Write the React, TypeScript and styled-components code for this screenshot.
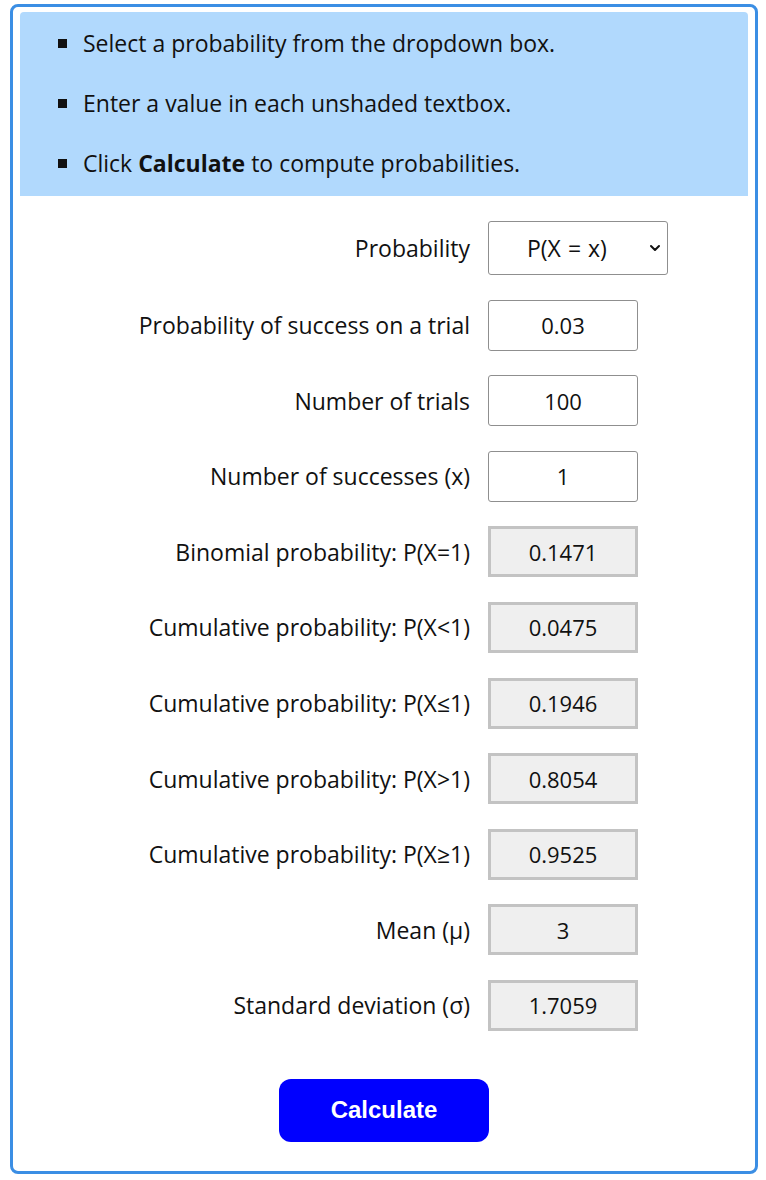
import React, { FC } from 'react'
import styled, { createGlobalStyle } from 'styled-components'

const GlobalStyle = createGlobalStyle`
  html, body {
    margin: 0;
    padding: 0;
    background: #ffffff;
  }
  body {
    font-family: 'Open Sans', 'Noto Sans', 'Liberation Sans', sans-serif;
    color: #111111;
  }
`

interface IRow {
  label: string
  value: string
  readOnly?: boolean
}

const rows: IRow[] = [
  { label: 'Probability of success on a trial', value: '0.03' },
  { label: 'Number of trials', value: '100' },
  { label: 'Number of successes (x)', value: '1' },
  { label: 'Binomial probability: P(X=1)', value: '0.1471', readOnly: true },
  { label: 'Cumulative probability: P(X<1)', value: '0.0475', readOnly: true },
  { label: 'Cumulative probability: P(X≤1)', value: '0.1946', readOnly: true },
  { label: 'Cumulative probability: P(X>1)', value: '0.8054', readOnly: true },
  { label: 'Cumulative probability: P(X≥1)', value: '0.9525', readOnly: true },
  { label: 'Mean (μ)', value: '3', readOnly: true },
  { label: 'Standard deviation (σ)', value: '1.7059', readOnly: true },
]

const App: FC = () => {
  return (
    <>
      <GlobalStyle />
      <Card>
        <Instructions>
          <li>Select a probability from the dropdown box.</li>
          <li>Enter a value in each unshaded textbox.</li>
          <li>
            Click <b>Calculate</b> to compute probabilities.
          </li>
        </Instructions>

        <Form>
          <Label>Probability</Label>
          <SelectBox>
            <span>P(X = x)</span>
            <svg width='14' height='14' viewBox='0 0 14 14'>
              <path d='M3 5 L7 9 L11 5' fill='none' stroke='#111' strokeWidth='2' strokeLinecap='round' strokeLinejoin='round' />
            </svg>
          </SelectBox>

          {rows.map((row) => (
            <React.Fragment key={row.label}>
              <Label>{row.label}</Label>
              <Field $readOnly={row.readOnly}>{row.value}</Field>
            </React.Fragment>
          ))}
        </Form>

        <ButtonRow>
          <CalcButton>Calculate</CalcButton>
        </ButtonRow>
      </Card>
    </>
  )
}

const Card = styled.div`
  box-sizing: border-box;
  width: 748px;
  height: 1170px;
  margin: 4px 0 0 10px;
  padding: 5px 7px 0;
  border: 3px solid #3b8ee4;
  border-radius: 8px;
`

const Instructions = styled.ul`
  margin: 0;
  padding: 16px 0 18px 63px;
  background: #b1d9fd;
  border-radius: 4px 4px 0 0;
  list-style: none;

  li {
    position: relative;
    font-size: 23px;
    line-height: 30px;
    margin-bottom: 30px;
  }
  li:last-child {
    margin-bottom: 0;
  }
  li::before {
    content: '';
    position: absolute;
    left: -25px;
    top: 11px;
    width: 9px;
    height: 9px;
    background: #111;
  }
  b {
    font-weight: 700;
  }
`

const Form = styled.div`
  display: grid;
  grid-template-columns: 450px auto;
  column-gap: 18px;
  row-gap: 24.6px;
  align-items: center;
  justify-items: start;
  margin-top: 25px;
`

const Label = styled.div`
  justify-self: end;
  font-size: 23px;
  white-space: nowrap;
`

const SelectBox = styled.div`
  box-sizing: border-box;
  width: 180px;
  height: 54px;
  display: flex;
  align-items: center;
  justify-content: space-between;
  padding: 0 5px 0 38px;
  border: 1px solid #8f8f8f;
  border-radius: 3px;
  font-size: 23px;
  word-spacing: 1px;
`

const Field = styled.div<{ $readOnly?: boolean }>`
  box-sizing: border-box;
  width: 150px;
  height: 51px;
  display: flex;
  align-items: center;
  justify-content: center;
  font-size: 22px;
  background: ${({ $readOnly }) => ($readOnly ? '#efefef' : '#ffffff')};
  border: ${({ $readOnly }) => ($readOnly ? '3px solid #c3c3c3' : '1px solid #8f8f8f')};
  border-radius: ${({ $readOnly }) => ($readOnly ? '0' : '3px')};
`

const ButtonRow = styled.div`
  display: flex;
  justify-content: center;
  margin-top: 48px;
`

const CalcButton = styled.button`
  width: 210px;
  height: 63px;
  background: #0000ff;
  color: #ffffff;
  border: none;
  border-radius: 12px;
  font-family: 'Liberation Sans', Arial, sans-serif;
  font-weight: 700;
  font-size: 24px;
`

export default App
